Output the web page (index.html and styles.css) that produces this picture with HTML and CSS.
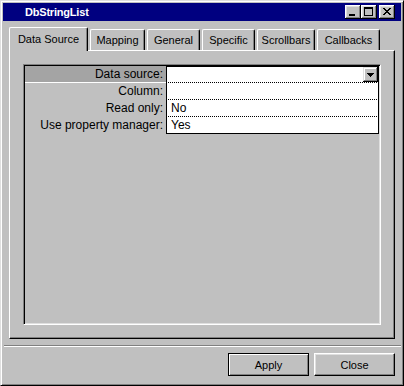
FILE: index.html
```html
<!DOCTYPE html>
<html lang="en">
<head>
    <meta charset="UTF-8">
    <meta name="viewport" content="width=device-width, initial-scale=1.0">
    <title>DbStringList</title>
    <link rel="stylesheet" href="styles.css">
</head>
<body>
    <div class="window">
        <div class="titlebar">
            <span class="title">DbStringList</span>
            <div class="caption-buttons">
                <span class="cbtn"><svg width="16" height="14" shape-rendering="crispEdges"><rect x="4" y="9" width="6" height="2" fill="#000"/></svg></span>
                <span class="cbtn"><svg width="16" height="14" shape-rendering="crispEdges"><rect x="3" y="2" width="9" height="2" fill="#000"/><rect x="3" y="2" width="1" height="9" fill="#000"/><rect x="11" y="2" width="1" height="9" fill="#000"/><rect x="3" y="10" width="9" height="1" fill="#000"/></svg></span>
                <span class="cbtn close"><svg width="16" height="14" shape-rendering="crispEdges"><path d="M4 3h2v1h1v1h2v-1h1v-1h2v1h-1v1h-1v1h-1v1h1v1h1v1h1v1h-2v-1h-1v-1h-2v1h-1v1h-2v-1h1v-1h1v-1h1v-1h-1v-1h-1v-1h-1z" fill="#000"/></svg></span>
            </div>
        </div>

        <div class="tabs">
            <div class="tab tab-source active">Data Source</div>
            <div class="tab tab-mapping">Mapping</div>
            <div class="tab tab-general">General</div>
            <div class="tab tab-specific">Specific</div>
            <div class="tab tab-scrollbars">Scrollbars</div>
            <div class="tab tab-callbacks">Callbacks</div>
        </div>

        <div class="panel">
            <div class="grid">
                <div class="props">
                    <div class="label selected">Data source:</div>
                    <div class="value first">
                        <span class="combo-btn"><svg width="7" height="4" shape-rendering="crispEdges"><path d="M0 0h7v1h-1v1h-1v1h-1v1h-1v-1h-1v-1h-1v-1h-1z" fill="#000"/></svg></span>
                    </div>
                    <div class="label">Column:</div>
                    <div class="value"></div>
                    <div class="label">Read only:</div>
                    <div class="value">No</div>
                    <div class="label">Use property manager:</div>
                    <div class="value last">Yes</div>
                </div>
            </div>
        </div>

        <div class="separator"></div>

        <div class="actions">
            <button class="btn default">Apply</button>
            <button class="btn">Close</button>
        </div>
    </div>
</body>
</html>
```

FILE: styles.css
```css
        body {
            margin: 0;
            font-family: "Liberation Sans", Arial, sans-serif;
            background: #c0c0c0;
            color: #000;
        }

        .window {
            width: 404px;
            height: 386px;
            box-sizing: border-box;
            display: flex;
            flex-direction: column;
            padding: 2px;
            background: #c0c0c0;
            border: 1px solid;
            border-color: #dfdfdf #000 #000 #dfdfdf;
            box-shadow: inset 1px 1px #fff, inset -1px -1px #808080;
        }

        .titlebar {
            height: 18px;
            display: flex;
            align-items: center;
            justify-content: space-between;
            padding: 0 6px 0 22px;
            background: #000080;
            color: #fff;
        }

        .title {
            font-size: 11px;
            font-weight: bold;
            letter-spacing: -0.2px;
        }

        .caption-buttons {
            display: flex;
        }

        .cbtn {
            width: 16px;
            height: 14px;
            background: #c0c0c0;
            box-shadow: inset -1px -1px #000, inset 1px 1px #fff, inset -2px -2px #808080, inset 2px 2px #dfdfdf;
        }

        .cbtn svg {
            display: block;
        }

        .cbtn.close {
            margin-left: 2px;
        }

        .tabs {
            display: flex;
            align-items: flex-end;
            gap: 2px;
            height: 23px;
            margin-top: 6px;
            padding-left: 6px;
        }

        .tab {
            box-sizing: border-box;
            height: 21px;
            display: flex;
            align-items: center;
            justify-content: center;
            font-size: 11px;
            background: #c0c0c0;
            border: 1px solid;
            border-bottom: none;
            border-color: #fff #000 #fff #fff;
            border-radius: 2px 2px 0 0;
            box-shadow: inset -1px 0 #808080;
        }

        .tab-source { width: 79px; }
        .tab-mapping { width: 55px; }
        .tab-general { width: 53px; }
        .tab-specific { width: 53px; }
        .tab-scrollbars { width: 58px; }
        .tab-callbacks { width: 63px; }

        .tab.active {
            height: 24px;
            margin-bottom: -1px;
            padding-bottom: 1px;
            position: relative;
            z-index: 1;
        }

        .panel {
            height: 289px;
            box-sizing: border-box;
            margin: 0 6px;
            padding: 13px;
            display: flex;
            border: 1px solid;
            border-color: #fff #000 #000 #fff;
            box-shadow: inset -1px -1px #808080;
        }

        .grid {
            flex: 1;
            padding: 1px;
            border: 1px solid;
            border-color: #808080 #fff #fff #808080;
            box-shadow: inset 1px 1px #000, inset -1px -1px #dfdfdf;
        }

        .props {
            display: grid;
            grid-template-columns: 141px 213px;
            grid-auto-rows: 17px;
            font-size: 12px;
        }

        .props .label {
            text-align: right;
            padding-right: 3px;
            line-height: 16px;
        }

        .props .label.selected {
            background: #a4a4a4;
            border-bottom: 1px solid #fff;
            margin-bottom: -1px;
            height: 16px;
        }

        .props .value {
            display: flex;
            align-items: center;
            justify-content: space-between;
            padding-left: 4px;
            background: #fff;
            border-left: 1px solid #000;
            border-right: 1px solid #000;
            border-bottom: 1px dotted #000;
        }

        .props .value.first {
            border-top: 1px solid #000;
            justify-content: flex-end;
        }

        .props .value.last {
            border-bottom: 1px solid #000;
        }

        .combo-btn {
            width: 15px;
            height: 15px;
            box-sizing: border-box;
            display: flex;
            align-items: center;
            justify-content: center;
            background: #c0c0c0;
            box-shadow: inset -1px -1px #000, inset 1px 1px #dfdfdf, inset -2px -2px #808080, inset 2px 2px #fff;
        }

        .combo-btn svg {
            display: block;
        }

        .separator {
            height: 0;
            margin: 6px 0 0 1px;
            border-top: 1px solid #808080;
            border-bottom: 1px solid #fff;
        }

        .actions {
            display: flex;
            justify-content: flex-end;
            gap: 5px;
            margin-top: 6px;
            padding-right: 6px;
        }

        .btn {
            width: 81px;
            height: 23px;
            box-sizing: border-box;
            padding: 0;
            font-family: inherit;
            font-size: 11px;
            color: #000;
            background: #c0c0c0;
            border: 1px solid;
            border-color: #fff #000 #000 #fff;
            border-radius: 0;
            box-shadow: inset -1px -1px #808080, inset 1px 1px #dfdfdf;
        }

        .btn.default {
            border-color: #000;
            box-shadow: inset 1px 1px #fff, inset -1px -1px #808080;
        }
```
